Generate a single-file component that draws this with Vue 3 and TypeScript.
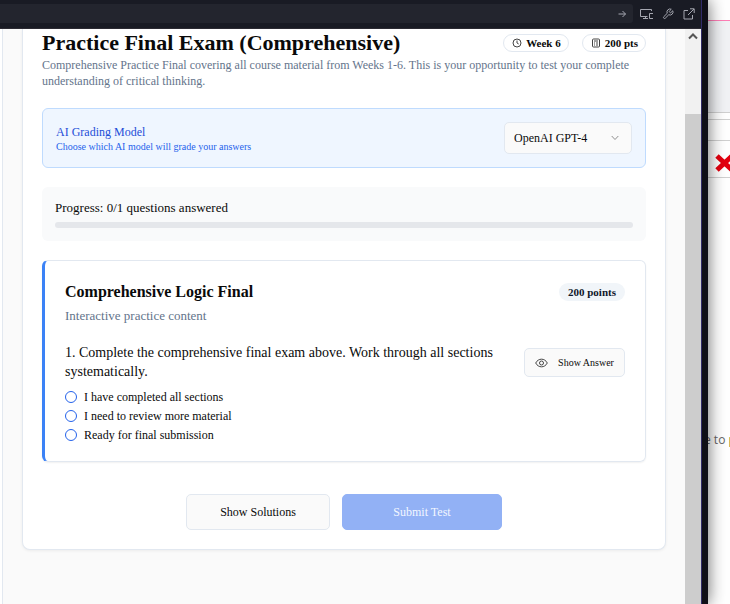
<script setup lang="ts">
import { ref } from 'vue'

const prompt = ref('')
const model = ref('gpt-4')
const answer = ref<string | null>(null)
const options: string[] = [
  'I have completed all sections',
  'I need to review more material',
  'Ready for final submission',
]
const progress = ref(0)
</script>

<template>
  <div class="desktop">
    <div class="window">
      <header class="toolbar">
        <div class="address">
          <input v-model="prompt" class="address-input" type="text" aria-label="Address" />
          <button class="icon-btn go" type="button" aria-label="Go">
            <svg width="8" height="8" viewBox="0 0 8 8" class="stroke"><path d="M.5 4h7M4.5 1l3 3-3 3" /></svg>
          </button>
        </div>
        <div class="tools">
          <button class="icon-btn" type="button" aria-label="Devices">
            <svg width="13" height="12" viewBox="0 0 13 12" class="stroke"><path d="M11.5 3V1.500H.5v7h7M3 10.500h5M5.500 8.500v2M12.500 5.500h-3v5h3M12.500 5v1M12.500 10v1" /></svg>
          </button>
          <button class="icon-btn" type="button" aria-label="Tools">
            <svg width="12" height="12" viewBox="0 0 24 24" class="stroke wrench"><path d="M14.7 6.3a1 1 0 0 0 0 1.4l1.6 1.6a1 1 0 0 0 1.4 0l3.8-3.8a6 6 0 0 1-8 8l-6.9 6.9a2.1 2.1 0 0 1-3-3l6.900-6.900a6 6 0 0 1 8-8z" /></svg>
          </button>
          <button class="icon-btn" type="button" aria-label="Open externally">
            <svg width="12" height="12" viewBox="0 0 12 12" class="stroke"><path d="M5 2.500H1v8.500h8.500V7M7 .8h4.200V5M11 1 5 7" /></svg>
          </button>
        </div>
      </header>

      <div class="viewport">
        <main class="page">
          <section class="exam">
            <div class="title-row">
              <h1>Practice Final Exam (Comprehensive)</h1>
              <div class="pills">
                <span class="pill">
                  <svg width="10" height="10" viewBox="0 0 10 10" class="ink"><circle cx="5" cy="5" r="4" /><path d="M5 2.500V5l1.700 1" /></svg>
                  Week 6
                </span>
                <span class="pill">
                  <svg width="10" height="10" viewBox="0 0 10 10" class="ink"><rect x="1.500" y="1" width="7" height="8" rx="1" /><path d="M3 3h4M3 5h1M5 5h2M3 7h1M5 7h2" /></svg>
                  200 pts
                </span>
              </div>
            </div>
            <p class="lead">Comprehensive Practice Final covering all course material from Weeks 1-6. This is your opportunity to test your complete understanding of critical thinking.</p>

            <div class="grading">
              <div>
                <label for="model" class="grading-title">AI Grading Model</label>
                <p class="grading-note">Choose which AI model will grade your answers</p>
              </div>
              <div class="select-wrap">
                <select id="model" v-model="model">
                  <option value="gpt-4">OpenAI GPT-4</option>
                </select>
                <svg class="chevron" width="8" height="6" viewBox="0 0 8 6"><path d="M.7 1 4 4.500 7.300 1" /></svg>
              </div>
            </div>

            <div class="progress">
              <span>Progress: 0/1 questions answered</span>
              <div class="track"><div class="fill" :style="{ width: progress + '%' }"></div></div>
            </div>

            <article class="card">
              <div class="card-head">
                <h2>Comprehensive Logic Final</h2>
                <span class="points">200 points</span>
              </div>
              <p class="sub">Interactive practice content</p>
              <div class="question-row">
                <p id="question" class="question">1. Complete the comprehensive final exam above. Work through all sections systematically.</p>
                <button class="btn small" type="button">
                  <svg width="13" height="10" viewBox="0 0 13 10" class="ink"><path d="M.7 5C3.300-.1 9.700-.1 12.300 5 9.700 10.100 3.300 10.100.7 5z" /><circle cx="6.500" cy="5" r="2" /></svg>
                  Show Answer
                </button>
              </div>
              <div class="options" role="radiogroup" aria-labelledby="question">
                <label v-for="option in options" :key="option">
                  <input v-model="answer" type="radio" name="answer" :value="option" />
                  {{ option }}
                </label>
              </div>
            </article>

            <div class="actions">
              <button class="btn solutions" type="button">Show Solutions</button>
              <button class="btn submit" type="button" disabled>Submit Test</button>
            </div>
          </section>
        </main>
        <div class="scrollbar">
          <button class="scroll-up" type="button" aria-label="Scroll up">
            <svg width="10" height="7" viewBox="0 0 10 7"><path d="M1 5.500 5 1.500l4 4" /></svg>
          </button>
          <div class="thumb"></div>
        </div>
      </div>
    </div>

    <aside class="behind">
      <div class="strip"></div>
      <div class="panel"></div>
      <div class="gap"></div>
      <div class="line-row"></div>
      <div class="cross-row">
        <svg width="19" height="18" viewBox="0 0 19 18"><path d="M2 2l15 14M17 2 2 16" /></svg>
      </div>
      <p class="snippet">e to <span>p</span></p>
    </aside>
  </div>
</template>

<style>
body {
  margin: 0;
  overflow: hidden;
}
</style>

<style scoped>
* {
  box-sizing: border-box;
}
h1, h2, p {
  margin: 0;
}
button, select, input {
  font: inherit;
  color: inherit;
}
svg {
  flex: none;
  fill: none;
}
.desktop {
  display: flex;
  height: 100vh;
  overflow: hidden;
  background: #fff;
  color: #0a0a0a;
  font-family: Georgia, "Liberation Serif", serif;
  font-size: 12px;
}
.window {
  display: flex;
  flex: 1;
  flex-direction: column;
  min-width: 0;
  border-right: 6px solid #0f0f17;
  box-shadow: 0 0 16px rgba(0, 0, 0, 0.6);
  z-index: 1;
}
.toolbar {
  display: flex;
  flex: none;
  align-items: center;
  height: 29px;
  padding: 0 6px 1px 0;
  background: #191b24;
  border-right: 1px solid #302a68;
  border-bottom: 1px solid #2c2b33;
}
.address {
  display: flex;
  flex: 1;
  align-items: center;
  height: 19px;
  padding-right: 7px;
  background: #23252e;
  border-radius: 0 3px 3px 0;
}
.address-input {
  flex: 1;
  min-width: 0;
  border: 0;
  outline: 0;
  background: transparent;
  color: #b9bbc4;
}
.icon-btn {
  display: flex;
  padding: 0;
  border: 0;
  background: none;
}
.tools {
  display: flex;
  align-items: center;
  gap: 9px;
  padding-left: 7px;
}
.stroke {
  stroke: #a5a7b0;
  stroke-width: 1;
}
.wrench {
  stroke-width: 2;
}
.viewport {
  display: flex;
  flex: 1;
  min-height: 0;
  border-right: 1px solid #302a68;
}
.page {
  flex: 1;
  min-width: 0;
  margin-left: 2px;
  padding: 0 19px;
  border-left: 1px solid #e2e8f0;
  background: #fafafa;
}
.exam {
  padding: 3px 19px 19px;
  border: 1px solid #e2e8f0;
  border-top: 0;
  border-radius: 0 0 8px 8px;
  background: #fff;
  box-shadow: 0 1px 3px rgba(0, 0, 0, 0.06);
}
.title-row {
  display: flex;
  align-items: center;
  justify-content: space-between;
  height: 22px;
}
h1 {
  font-size: 22px;
  line-height: 22px;
  white-space: nowrap;
}
.pills {
  display: flex;
  gap: 13px;
}
.pill {
  display: flex;
  align-items: center;
  gap: 4px;
  height: 18px;
  padding: 0 7px 0 8px;
  border: 1px solid #e2e8f0;
  border-radius: 9px;
  font-size: 11px;
  font-weight: 700;
  white-space: nowrap;
}
.ink {
  stroke: #444;
  stroke-width: 1;
}
.lead {
  margin-top: 3px;
  color: #64748b;
  line-height: 16px;
}
.grading {
  display: flex;
  align-items: center;
  justify-content: space-between;
  height: 60px;
  margin-top: 19px;
  padding: 0 13px;
  border: 1px solid #bfdbfe;
  border-radius: 6px;
  background: #eff6ff;
}
.grading-title {
  display: block;
  color: #1d4ed8;
  line-height: 16px;
}
.grading-note {
  color: #2563eb;
  font-size: 10px;
  line-height: 13px;
}
.select-wrap {
  position: relative;
  width: 128px;
}
select {
  display: block;
  width: 100%;
  height: 32px;
  padding: 0 9px;
  appearance: none;
  border: 1px solid #e2e8f0;
  border-radius: 5px;
  background: #fafafa;
}
.chevron {
  position: absolute;
  top: 13px;
  right: 13px;
  stroke: #8f8f8f;
  stroke-width: 1;
  pointer-events: none;
}
.progress {
  height: 54px;
  margin-top: 19px;
  padding: 13px 13px 0;
  border-radius: 6px;
  background: #f9fafb;
  font-size: 13px;
  line-height: 16px;
}
.track {
  height: 6px;
  margin-top: 6px;
  overflow: hidden;
  border-radius: 3px;
  background: #e5e7eb;
}
.fill {
  height: 100%;
  background: #2563eb;
}
.card {
  margin-top: 19px;
  padding: 21px 20px 18px;
  border: 1px solid #e2e8f0;
  border-left: 3px solid #3b82f6;
  border-radius: 6px;
  box-shadow: 0 1px 2px rgba(0, 0, 0, 0.06);
}
.card-head {
  display: flex;
  align-items: center;
  justify-content: space-between;
  height: 20px;
}
h2 {
  font-size: 16px;
  line-height: 20px;
}
.points {
  padding: 0 9px;
  border-radius: 9px;
  background: #f1f5f9;
  color: #0f172a;
  font-size: 11px;
  font-weight: 700;
  line-height: 18px;
}
.sub {
  margin-top: 6px;
  color: #64748b;
  font-size: 13px;
  line-height: 16px;
}
.question-row {
  display: flex;
  align-items: flex-start;
  justify-content: space-between;
  gap: 16px;
  margin-top: 19px;
}
.question {
  font-size: 14px;
  line-height: 19px;
}
.btn {
  display: flex;
  flex: none;
  align-items: center;
  justify-content: center;
  padding: 0;
  border: 1px solid #e2e8f0;
  border-radius: 5px;
  background: #fafafa;
}
.small {
  gap: 10px;
  width: 101px;
  height: 29px;
  margin-top: 5px;
  font-size: 10px;
}
.options {
  display: grid;
  gap: 3px;
  margin-top: 8px;
}
.options label {
  display: flex;
  align-items: center;
  gap: 7px;
  line-height: 16px;
}
.options input {
  width: 12px;
  height: 12px;
  margin: 0;
  appearance: none;
  border: 1px solid #2563eb;
  border-radius: 50%;
}
.options input:checked {
  border-width: 4px;
}
.actions {
  display: flex;
  justify-content: center;
  gap: 12px;
  margin-top: 32px;
}
.solutions {
  width: 144px;
  height: 36px;
}
.submit {
  width: 160px;
  height: 36px;
  border-color: #92b1f5;
  background: #92b1f5;
  color: #f3f7ff;
}
.scrollbar {
  display: flex;
  flex-direction: column;
  width: 16px;
  background: #f1f1f1;
}
.scroll-up {
  height: 85px;
  padding: 4px 3px;
  border: 0;
  background: none;
  display: flex;
  align-items: flex-start;
}
.scroll-up path {
  stroke: #555;
  stroke-width: 2;
}
.thumb {
  flex: 1;
  background: #cdcdcd;
}
.behind {
  width: 22px;
}
.strip {
  height: 21px;
  border-bottom: 1px solid #ff7eb6;
}
.panel {
  height: 92px;
  border-bottom: 1px solid #d0d0d0;
  background: #f1f2f5;
}
.gap {
  height: 7px;
  border-bottom: 1px solid #d0d0d0;
}
.line-row {
  height: 21px;
  border-bottom: 1px solid #d0d0d0;
}
.cross-row {
  display: flex;
  align-items: center;
  height: 37px;
  padding: 8px 0 0 7px;
  border-bottom: 1px solid #d0d0d0;
}
.cross-row path {
  stroke: #e3000f;
  stroke-width: 5;
}
.snippet {
  margin: 254px 0 0 -4px;
  color: #666;
  font-family: "Open Sans", sans-serif;
  line-height: 16px;
  white-space: nowrap;
}
.snippet span {
  color: #3f7f2f;
}
</style>
